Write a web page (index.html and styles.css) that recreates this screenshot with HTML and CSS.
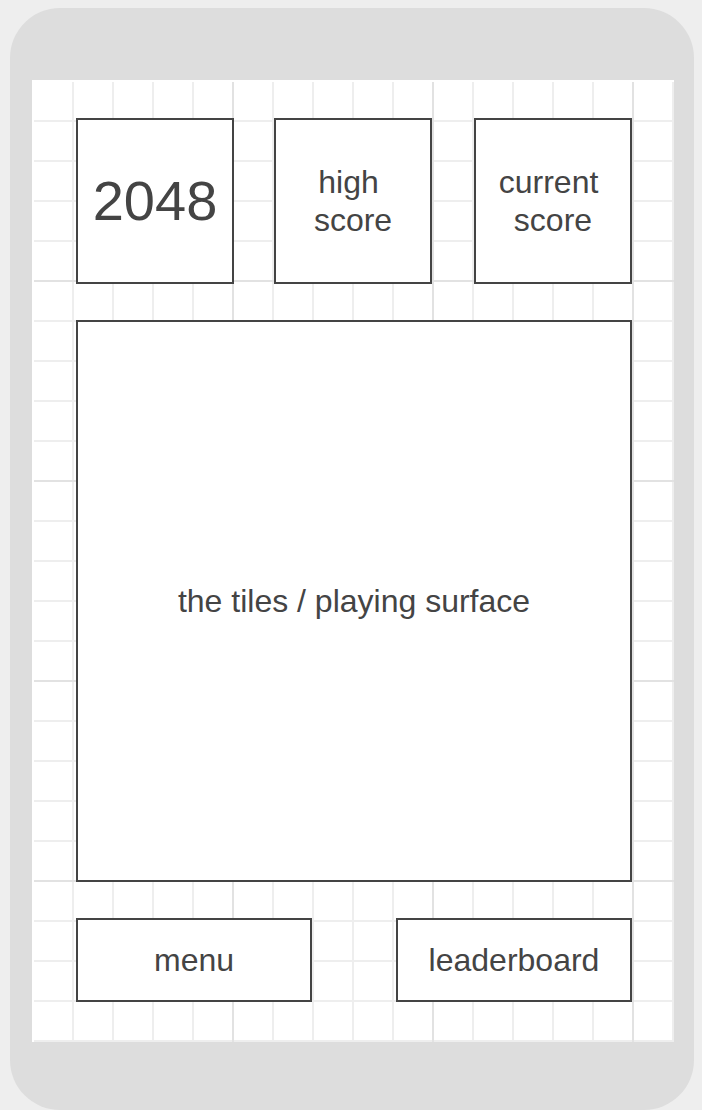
FILE: index.html
```html
<!doctype html>
<html>
    <head>
        <title>2048 wireframe</title>
        <link rel="stylesheet" href="styles.css">
    </head>
    <body>
        <div class="phone">
            <div class="screen">
                <div class="top-row">
                    <div class="box title">2048</div>
                    <div class="box score">high&nbsp;<br />score</div>
                    <div class="box">current&nbsp;<br />score</div>
                </div>
                <div class="box board">the tiles / playing surface</div>
                <div class="bottom-row">
                    <div class="box button">menu</div>
                    <div class="box button">leaderboard</div>
                </div>
            </div>
        </div>
    </body>
</html>
```

FILE: styles.css
```css
html,
body {
    margin: 0;
    height: 100%;
    overflow: hidden;
}
body {
    background: #eee;
    font-family: "Liberation Sans", Arial, sans-serif;
    color: #444;
    padding: 8px 0 0 10px;
    box-sizing: border-box;
}
.phone {
    width: 684px;
    height: 1102px;
    background: #ddd;
    border-radius: 50px;
    padding: 72px 0 0 22px;
    box-sizing: border-box;
}
.screen {
    width: 642px;
    height: 962px;
    box-sizing: border-box;
    border-top: 2px solid #fff;
    border-left: 2px solid #fff;
    padding: 36px 42px 0 42px;
    background:
        linear-gradient(to right, transparent 198px, #e2e2e2 198px) 0 0 / 200px 200px,
        linear-gradient(to bottom, transparent 198px, #e2e2e2 198px) 0 0 / 200px 200px,
        linear-gradient(to right, transparent 38px, #eee 38px) 0 0 / 40px 40px,
        linear-gradient(to bottom, transparent 38px, #eee 38px) 0 0 / 40px 40px,
        #fff;
    background-clip: padding-box;
    display: flex;
    flex-direction: column;
    gap: 36px;
}
.box {
    border: 2px solid #444;
    background: #fff;
    box-sizing: border-box;
    display: flex;
    align-items: center;
    justify-content: center;
    text-align: center;
    font-size: 32px;
    line-height: 38px;
}
.top-row {
    display: flex;
    gap: 40px;
}
.top-row .box {
    width: 158px;
    height: 166px;
}
.top-row .score {
    margin-right: auto;
}
.title {
    font-size: 56px;
}
.board {
    height: 562px;
}
.bottom-row {
    display: flex;
    justify-content: space-between;
}
.button {
    width: 236px;
    height: 84px;
}
```
